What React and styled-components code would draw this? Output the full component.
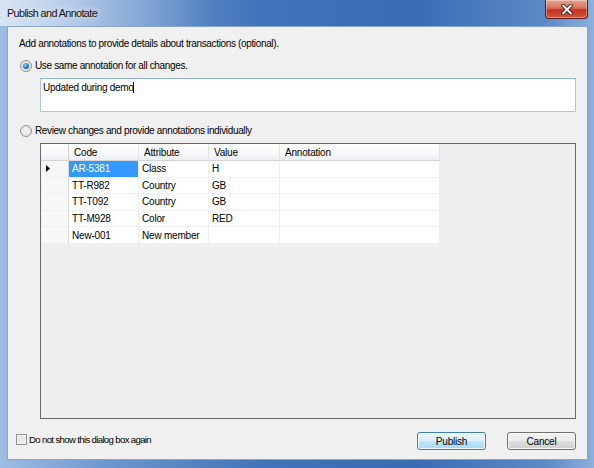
import React from "react";
import styled, { createGlobalStyle } from "styled-components";

const Global = createGlobalStyle`
  html, body { margin: 0; padding: 0; background: #fff; }
  #root { width: 594px; height: 468px; }
  * { box-sizing: border-box; }
`;

const Window = styled.div`
  width: 594px;
  height: 468px;
  display: flex;
  flex-direction: column;
  background: linear-gradient(to right, #9dbde3 0%, #6c97cf 18%, #3f72b8 45%, #3a6cb4 70%, #5b8ac8 92%, #8db0dc 100%);
  font-family: "Liberation Sans", Arial, sans-serif;
  position: relative;
`;

const TitleBar = styled.div`
  height: 26px;
  display: flex;
  align-items: center;
  padding-left: 7px;
  background: linear-gradient(to right, rgba(255,255,255,0.6) 0%, rgba(255,255,255,0.4) 14%, rgba(255,255,255,0) 36%);
`;

const Title = styled.span`
  font-family: "Liberation Sans", Arial, sans-serif;
  font-size: 10.8px;
  letter-spacing: -0.6px;
  color: #111;
  text-shadow: 0 0 6px rgba(255,255,255,0.9);
`;

const CloseButton = styled.div`
  position: absolute;
  top: 0;
  right: 6px;
  width: 43px;
  height: 19px;
  border: 1px solid #5a1d1d;
  border-top: none;
  border-radius: 0 0 4px 4px;
  background: linear-gradient(to bottom, #e8a493 0%, #d7705c 45%, #c3311b 55%, #d2563c 100%);
  display: flex;
  align-items: center;
  justify-content: center;
  box-shadow: inset 0 0 0 1px rgba(255,255,255,0.35);
`;

const Client = styled.div`
  flex: 1;
  margin: 0 6px 8px 7px;
  background: #f0f0f0;
  border: 1px solid #8ba6c9;
  padding: 10px 11px 0 11px;
  display: flex;
  flex-direction: column;
`;

const Label = styled.div`
  font-size: 10px;
  letter-spacing: -0.35px;
  color: #000;
  line-height: 13px;
`;

const OptionRow = styled.label`
  display: flex;
  align-items: center;
  gap: 3px;
  margin-top: ${(p) => p.$top}px;
  font-size: 10px;
  letter-spacing: -0.35px;
  line-height: 13px;
  color: #000;
  margin-left: 1px;
`;

const Radio = styled.span`
  width: 12px;
  height: 12px;
  border-radius: 50%;
  border: 1px solid #8e9297;
  background: radial-gradient(circle at 50% 50%, #f4f4f4 0%, #dcdcdc 100%);
  display: flex;
  align-items: center;
  justify-content: center;
  &::after {
    content: "";
    display: ${(p) => (p.$checked ? "block" : "none")};
    width: 6px;
    height: 6px;
    border-radius: 50%;
    background: radial-gradient(circle at 40% 35%, #8fd6ff 0%, #1f73c6 55%, #0c3f84 100%);
  }
`;

const TextBox = styled.div`
  margin: 6px 0 0 21px;
  height: 34px;
  background: #fff;
  border: 1px solid #abc8e6;
  border-top-color: #8eb3dc;
  padding: 2px 2px;
  font-size: 10px;
  letter-spacing: -0.3px;
  line-height: 13px;
  color: #000;
`;

const Caret = styled.span`
  display: inline-block;
  width: 1px;
  height: 11px;
  background: #000;
  vertical-align: -2px;
`;

const GridBox = styled.div`
  margin: 6px 0 0 21px;
  height: 276px;
  border: 1px solid #696969;
  background: #efefef;
`;

const Table = styled.div`
  display: grid;
  grid-template-columns: 28px 70px 70px 71px 160px;
  grid-template-rows: 17px repeat(5, 16.6px);
  width: 399px;
  background: #fff;
`;

const HeaderCell = styled.div`
  font-size: 10px;
  letter-spacing: -0.2px;
  color: #000;
  padding-left: 5px;
  display: flex;
  align-items: center;
  background: linear-gradient(to bottom, #ffffff 0%, #f7f8fa 60%, #eceef1 100%);
  border-right: 1px solid #e3e5e8;
  border-bottom: 1px solid #d5d5d5;
  &:first-child { border-right-color: #d0d0d0; }
`;

const RowHeader = styled.div`
  background: #f7f7f7;
  border-right: 1px solid #d9d9d9;
  border-bottom: 1px solid #f0f0f0;
  display: flex;
  align-items: center;
  padding-left: 5px;
`;

const Cell = styled.div`
  font-size: 10px;
  letter-spacing: -0.2px;
  color: ${(p) => (p.$selected ? "#fff" : "#000")};
  background: ${(p) => (p.$selected ? "#3399ff" : "#fff")};
  padding-left: 3px;
  display: flex;
  align-items: center;
  border-right: 1px solid #f0f0f0;
  border-bottom: 1px solid #f0f0f0;
  white-space: nowrap;
`;

const Footer = styled.div`
  display: flex;
  align-items: center;
  margin-top: 13px;
`;

const CheckRow = styled.label`
  display: flex;
  align-items: center;
  gap: 2px;
  font-size: 9.6px;
  letter-spacing: -0.65px;
  color: #000;
  margin-left: -3px;
  margin-top: -4px;
`;

const CheckBox = styled.span`
  width: 11px;
  height: 11px;
  border: 1px solid #8e8f8f;
  background: linear-gradient(135deg, #dcdcdc 0%, #f4f4f4 100%);
  box-shadow: inset 0 0 0 1px #f6f6f6;
`;

const Spacer = styled.div`
  flex: 1;
`;

const Button = styled.button`
  width: 69px;
  height: 18px;
  margin-left: ${(p) => p.$gap}px;
  font-family: "Liberation Sans", Arial, sans-serif;
  font-size: 10px;
  letter-spacing: -0.2px;
  color: #000;
  padding: 0;
  border-radius: 3px;
  border: 1px solid ${(p) => (p.$focus ? "#3c7fb1" : "#707070")};
  background: ${(p) =>
    p.$focus
      ? "linear-gradient(to bottom, #eaf6fd 0%, #d9f0fc 50%, #bee6fd 51%, #a7d9f5 100%)"
      : "linear-gradient(to bottom, #f2f2f2 0%, #ebebeb 50%, #dddddd 51%, #cfcfcf 100%)"};
  box-shadow: inset 0 0 0 1px rgba(255,255,255,0.8);
`;

const rows = [
  ["AR-5381", "Class", "H"],
  ["TT-R982", "Country", "GB"],
  ["TT-T092", "Country", "GB"],
  ["TT-M928", "Color", "RED"],
  ["New-001", "New member", ""],
];

export default function App() {
  return (
    <>
      <Global />
      <Window>
        <TitleBar>
          <Title>Publish and Annotate</Title>
        </TitleBar>
        <CloseButton>
          <svg width="12" height="11" viewBox="0 0 12 11">
            <path d="M2 1.5 L10 9.5 M10 1.5 L2 9.5" stroke="#3a0d08" strokeWidth="3.6" strokeLinecap="round" />
            <path d="M2 1.5 L10 9.5 M10 1.5 L2 9.5" stroke="#fff" strokeWidth="2" strokeLinecap="round" />
          </svg>
        </CloseButton>
        <Client>
          <Label>Add annotations to provide details about transactions (optional).</Label>
          <OptionRow $top={9}>
            <Radio $checked />
            Use same annotation for all changes.
          </OptionRow>
          <TextBox>
            Updated during demo<Caret />
          </TextBox>
          <OptionRow $top={12}>
            <Radio />
            Review changes and provide annotations individually
          </OptionRow>
          <GridBox>
            <Table>
              <HeaderCell />
              <HeaderCell>Code</HeaderCell>
              <HeaderCell>Attribute</HeaderCell>
              <HeaderCell>Value</HeaderCell>
              <HeaderCell>Annotation</HeaderCell>
              {rows.map((r, i) => (
                <React.Fragment key={r[0]}>
                  <RowHeader>
                    {i === 0 && (
                      <svg width="4" height="7" viewBox="0 0 4 7">
                        <path d="M0 0 L4 3.5 L0 7 Z" fill="#000" />
                      </svg>
                    )}
                  </RowHeader>
                  <Cell $selected={i === 0}>{r[0]}</Cell>
                  <Cell>{r[1]}</Cell>
                  <Cell>{r[2]}</Cell>
                  <Cell />
                </React.Fragment>
              ))}
            </Table>
          </GridBox>
          <Footer>
            <CheckRow>
              <CheckBox />
              Do not show this dialog box again
            </CheckRow>
            <Spacer />
            <Button $focus>Publish</Button>
            <Button $gap={21}>Cancel</Button>
          </Footer>
        </Client>
      </Window>
    </>
  );
}
